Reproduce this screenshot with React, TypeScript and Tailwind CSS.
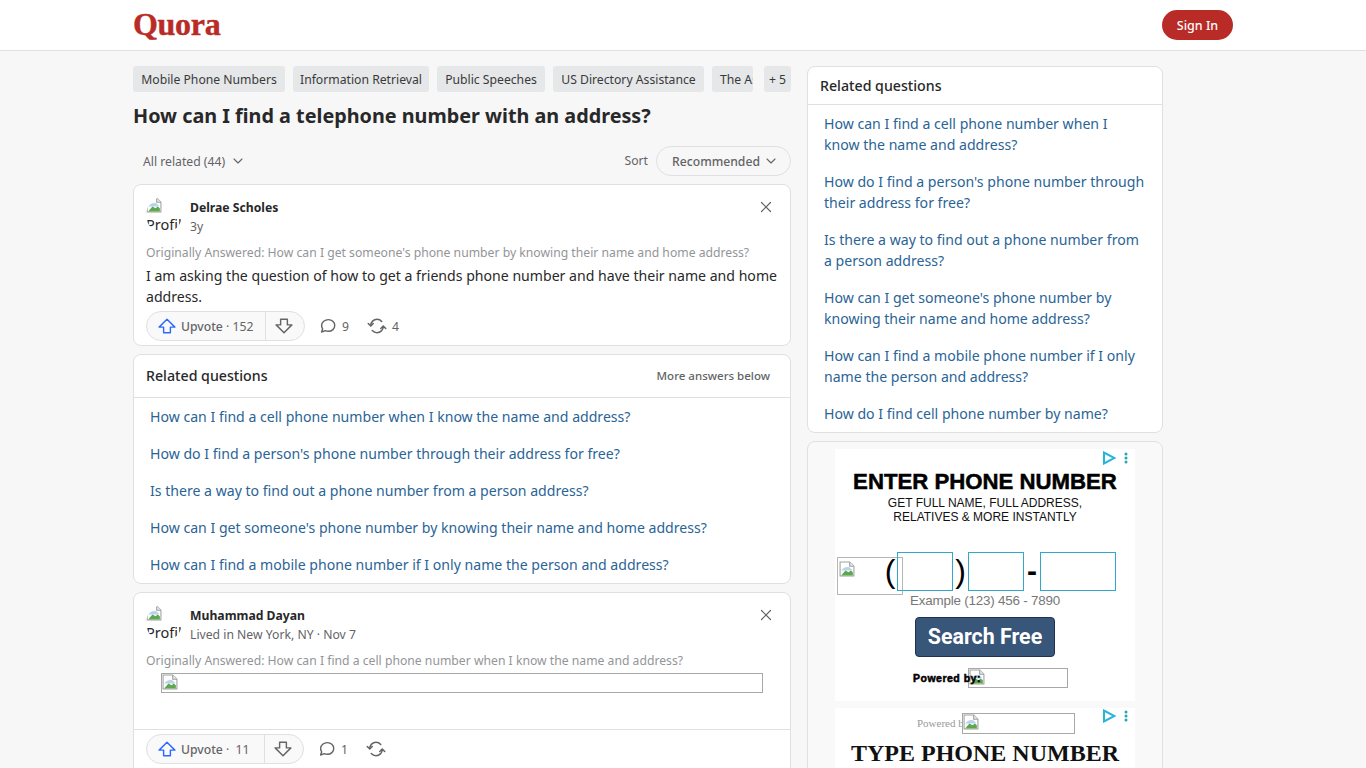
import { X, ChevronDown } from 'lucide-react';

const TOPICS = [
  { label: 'Mobile Phone Numbers', width: 'w-[152px]' },
  { label: 'Information Retrieval', width: 'w-[136px]' },
  { label: 'Public Speeches', width: 'w-[108px]' },
  { label: 'US Directory Assistance', width: 'w-[151px]' },
];

const RELATED = [
  'How can I find a cell phone number when I know the name and address?',
  "How do I find a person's phone number through their address for free?",
  'Is there a way to find out a phone number from a person address?',
  "How can I get someone's phone number by knowing their name and home address?",
  'How can I find a mobile phone number if I only name the person and address?',
];

const SIDE_RELATED = [...RELATED, 'How do I find cell phone number by name?'];

function BrokenImage() {
  return (
    <svg width="16" height="16" viewBox="0 0 15 15" className="shrink-0 relative">
      <path d="M1 1h9l4 4v9H1z" fill="#fff" stroke="#a0a0a0" />
      <path d="M10 1v4h4" fill="#e8e8e8" stroke="#a0a0a0" />
      <path d="M2 9c2-3 5-4 8-3l2 2v1H2z" fill="#b9d3ee" />
      <path d="M2 13.500l4-4.500 3 1.500 2-1.500 2 1.500v3H2z" fill="#5da84e" />
    </svg>
  );
}

function UpArrow() {
  return (
    <svg width="18" height="18" viewBox="0 0 24 24" fill="none" stroke="#2e69ff" strokeWidth="1.9" strokeLinejoin="round">
      <path d="M12 3 22.500 13.500h-6V21h-9v-7.500h-6z" />
    </svg>
  );
}

function DownArrow() {
  return (
    <svg width="18" height="18" viewBox="0 0 24 24" fill="none" stroke="#636466" strokeWidth="1.9" strokeLinejoin="round">
      <path d="M12 21 1.500 10.500h6V3h9v7.500h6z" />
    </svg>
  );
}

function CommentIcon() {
  return (
    <svg width="18" height="18" viewBox="0 0 24 24" fill="none" stroke="#636466" strokeWidth="1.9" strokeLinejoin="round">
      <path d="M12.500 3.500c4.700 0 8.500 3.400 8.500 7.800s-3.800 7.800-8.500 7.800c-1.500 0-2.900-.3-4-.9L3.500 20l1.400-4.200C4 14.500 3.500 13 3.500 11.300c0-4.400 4.300-7.800 9-7.800z" />
    </svg>
  );
}

function ShareIcon() {
  return (
    <svg width="20" height="20" viewBox="0 0 24 24" fill="none" stroke="#636466" strokeWidth="1.8" strokeLinejoin="round" strokeLinecap="round">
      <path d="M19.500 12.500c0 4.200-3.400 7.500-7.500 7.500-2.300 0-4.300-1-5.700-2.600" />
      <path d="M4.500 11.500C4.500 7.300 7.900 4 12 4c2.300 0 4.300 1 5.700 2.600" />
      <path d="M1.500 9l3 3 3-3M16.500 15l3-3 3 3" />
    </svg>
  );
}

function AdChoice() {
  return (
    <div className="flex items-center gap-[5px]">
      <svg width="14" height="14" viewBox="0 0 14 14" fill="none" stroke="#27b5dc" strokeWidth="2">
        <path d="M2 1.500v11L12.500 7z" />
      </svg>
      <svg width="10" height="12" viewBox="0 0 10 12" fill="#27a5b5">
        <circle cx="5" cy="2" r="1.500" />
        <circle cx="5" cy="6" r="1.500" />
        <circle cx="5" cy="10" r="1.500" />
      </svg>
    </div>
  );
}

function Avatar() {
  return (
    <div className="w-9 h-9 rounded-full overflow-hidden shrink-0 bg-white text-[14.5px] leading-[18px] text-[#282829]">
      <BrokenImage />
      <div className="mt-[2px]">Profile</div>
    </div>
  );
}

function ActionBar({ upvotes, comments, shares, dividerGap }: { upvotes: string; comments: string; shares?: string; dividerGap: string }) {
  return (
    <div className="flex items-center text-[12.2px] text-[#636466]">
      <div className="flex items-center h-[30px] rounded-full border border-[#dee0e1] bg-[#f9f9f9]">
        <div className={`flex items-center gap-[5px] h-full pl-[11px] border-r border-[#dee0e1] ${dividerGap}`}>
          <UpArrow />
          <span className="whitespace-pre pt-[2px]">
            <span className="font-medium">Upvote</span> · {upvotes}
          </span>
        </div>
        <div className="flex items-center h-full pl-[9px] pr-[11px]">
          <DownArrow />
        </div>
      </div>
      <div className="flex items-center gap-[5px] ml-[14px]">
        <CommentIcon />
        <span className="pt-[2px]">{comments}</span>
      </div>
      <div className="flex items-center gap-[5px] ml-[18px]">
        <ShareIcon />
        {shares && <span className="pt-[2px]">{shares}</span>}
      </div>
    </div>
  );
}

export default function App() {
  return (
    <div className="h-[768px] overflow-hidden bg-[#f7f7f8] text-[#282829] [font-family:'Noto_Sans',sans-serif]">
      {/* Header */}
      <header className="h-[51px] bg-white border-b border-[#dee0e1]">
        <div className="w-[1100px] ml-[133px] h-full flex items-center justify-between">
          <span className="pb-[2px] text-[32px] font-bold text-[#b92b27] tracking-[-0.3px] [-webkit-text-stroke:0.4px_#b92b27] [font-family:'Liberation_Serif',serif]">Quora</span>
          <button className="w-[71px] h-[30px] pt-[2px] rounded-full bg-[#b92b27] text-white text-[12.5px] font-medium">Sign In</button>
        </div>
      </header>

      <div className="flex gap-4 ml-[133px] mt-[15px]">
        {/* Main column */}
        <main className="w-[658px]">
          <div className="flex gap-2 text-[12.2px] text-[#393a3b]">
            {TOPICS.map((t) => (
              <span key={t.label} className={`h-[26px] pt-[2px] flex items-center justify-center bg-[#e6e7e8] rounded-[3px] whitespace-nowrap ${t.width}`}>{t.label}</span>
            ))}
            <span className="h-[26px] w-[41px] pl-2 pt-[2px] flex items-center bg-[#e6e7e8] rounded-[3px] overflow-hidden whitespace-nowrap">The Associated</span>
            <span className="h-[26px] w-[27px] ml-[3px] pt-[2px] shrink-0 flex items-center justify-center bg-[#e6e7e8] rounded-[3px] whitespace-nowrap">+ 5</span>
          </div>
          <h1 className="mt-[9px] text-[19.8px] leading-[30px] font-bold">How can I find a telephone number with an address?</h1>

          <div className="mt-[15px] flex items-center justify-between h-[30px] text-[12.2px] text-[#636466]">
            <div className="flex items-center gap-[5px] pl-[10px]">
              <span className="pt-[2px]">All related (44)</span>
              <ChevronDown size={16} strokeWidth={1.6} />
            </div>
            <div className="flex items-center gap-[8px]">
              <span>Sort</span>
              <div className="flex items-center justify-between w-[135px] h-[30px] pl-[15px] pr-[11px] rounded-full border border-[#dee0e1] font-medium">
                <span className="pt-[2px]">Recommended</span>
                <ChevronDown size={16} strokeWidth={1.6} />
              </div>
            </div>
          </div>

          {/* Answer 1 */}
          <section className="mt-[8px] bg-white rounded-lg border border-[#dee0e1] px-3 pt-[12px] h-[162px]">
            <div className="flex items-start gap-2">
              <Avatar />
              <div className="flex-1 mt-[1px] text-[12.2px] leading-[19px]">
                <div className="font-bold">Delrae Scholes</div>
                <div className="text-[#636466]">3y</div>
              </div>
              <X size={18} strokeWidth={1.6} color="#636466" className="mr-[3px] mt-[1px]" />
            </div>
            <div className="mt-[7px] text-[12.2px] leading-[19px] text-[#939598]">Originally Answered: How can I get someone's phone number by knowing their name and home address?</div>
            <p className="mt-[3px] text-[14.1px] leading-[21px]">I am asking the question of how to get a friends phone number and have their name and home address.</p>
            <div className="mt-[4px]">
              <ActionBar upvotes="152" comments="9" shares="4" dividerGap="w-[119px]" />
            </div>
          </section>

          {/* Related inside the feed */}
          <section className="mt-2 bg-white rounded-lg border border-[#dee0e1] h-[230px]">
            <div className="h-[43px] px-3 flex items-center justify-between border-b border-[#dee0e1]">
              <span className="text-[14.2px] font-medium">Related questions</span>
              <span className="text-[11.5px] text-[#636466] font-medium pr-2">More answers below</span>
            </div>
            <ul className="pt-[8px] pl-4 text-[14.1px] text-[#2a6496]">
              {RELATED.map((q) => (
                <li key={q} className="h-[37px] leading-[21px]">{q}</li>
              ))}
            </ul>
          </section>

          {/* Answer 2 */}
          <section className="mt-2 bg-white rounded-lg border border-[#dee0e1] h-[200px]">
            <div className="px-3 pt-[12px]">
              <div className="flex items-start gap-2">
                <Avatar />
                <div className="flex-1 mt-[1px] text-[12.2px] leading-[19px]">
                  <div className="font-bold">Muhammad Dayan</div>
                  <div className="text-[#636466]">Lived in New York, NY · Nov 7</div>
                </div>
                <X size={18} strokeWidth={1.6} color="#636466" className="mr-[3px] mt-[1px]" />
              </div>
              <div className="mt-[7px] text-[12.2px] leading-[19px] text-[#939598]">Originally Answered: How can I find a cell phone number when I know the name and address?</div>
              <div className="mt-[3px] ml-[15px] w-[602px] h-[20px] border border-[#a8a8a8] overflow-hidden">
                <BrokenImage />
              </div>
            </div>
            <div className="mt-[36px] border-t border-[#dee0e1] px-3 pt-[4px]">
              <ActionBar upvotes=" 11" comments="1" dividerGap="w-[118px]" />
            </div>
          </section>
        </main>

        {/* Sidebar */}
        <aside className="w-[356px]">
          <section className="bg-white rounded-lg border border-[#dee0e1] h-[367px]">
            <div className="h-[38px] px-3 flex items-center border-b border-[#dee0e1] text-[14.2px] font-medium">Related questions</div>
            <ul className="pt-[8px] pl-4 pr-[17px] text-[14.1px] leading-[21px] text-[#2a6496]">
              {SIDE_RELATED.map((q) => (
                <li key={q} className="mb-[16px]">{q}</li>
              ))}
            </ul>
          </section>

          <section className="mt-2 h-[400px] rounded-lg border border-[#dee0e1] bg-[#f9f9f9] pt-[7px]">
            {/* Ad 1 */}
            <div className="relative w-[300px] h-[252px] mx-auto bg-white text-center [font-family:'Liberation_Sans',sans-serif]">
              <div className="absolute top-[2px] right-[4px]"><AdChoice /></div>
              <div className="pt-[20px] text-[22.2px] leading-[25px] font-black text-black [-webkit-text-stroke:0.5px_black]">ENTER PHONE NUMBER</div>
              <div className="mt-[2px] text-[12px] leading-[14px] text-[#111]">GET FULL NAME, FULL ADDRESS,<br />RELATIVES &amp; MORE INSTANTLY</div>
              <div className="mt-[28px] flex items-start pl-[2px] h-[44px]">
                <div className="w-[66px] h-[38px] mt-[5px] border border-[#b5b5b5] pt-[3px] pl-[1px] text-left"><BrokenImage /></div>
                <span className="w-[14px] -ml-[20px] text-[32px] leading-[38px] text-black">(</span>
                <div className="w-[56px] h-[39px] border border-[#2fa8c9]" />
                <span className="w-[15px] text-[32px] leading-[38px] text-black">)</span>
                <div className="w-[56px] h-[39px] border border-[#2fa8c9]" />
                <span className="w-[16px] text-[30px] leading-[38px] font-bold text-black">-</span>
                <div className="w-[76px] h-[39px] border border-[#2fa8c9]" />
              </div>
              <div className="-mt-[4px] text-[13.4px] leading-[18px] text-[#777] tracking-[-0.2px]">Example (123) 456 - 7890</div>
              <button className="mt-[7px] w-[140px] h-[40px] rounded-[4px] border border-[#1f3350] bg-[#38557a] text-white text-[21.4px] font-bold [font-family:'Roboto',sans-serif]">Search Free</button>
              <div className="mt-[11px] flex items-center pl-[78px] h-[20px]">
                <div className="relative z-10 w-[55px] pt-[2px] text-[10.5px] font-bold text-black whitespace-nowrap text-left [-webkit-text-stroke:0.5px_black] tracking-[0.5px]">Powered by:</div>
                <div className="w-[100px] h-[20px] border border-[#a8a8a8] text-left"><BrokenImage /></div>
              </div>
            </div>

            {/* Ad 2 */}
            <div className="relative w-[300px] h-[70px] mt-[7px] mx-auto bg-white text-center [font-family:'Liberation_Serif',serif]">
              <div className="absolute top-[1px] right-[4px]"><AdChoice /></div>
              <div className="flex items-center pl-[82px] h-[30px] pt-[1px]">
                <span className="w-[45px] overflow-hidden whitespace-nowrap text-[11px] text-[#999] text-left">Powered by:</span>
                <div className="w-[113px] h-[21px] border border-[#a8a8a8] text-left"><BrokenImage /></div>
              </div>
              <div className="text-[24px] leading-[30px] font-bold text-[#111]">TYPE PHONE NUMBER</div>
            </div>
          </section>
        </aside>
      </div>
    </div>
  );
}
